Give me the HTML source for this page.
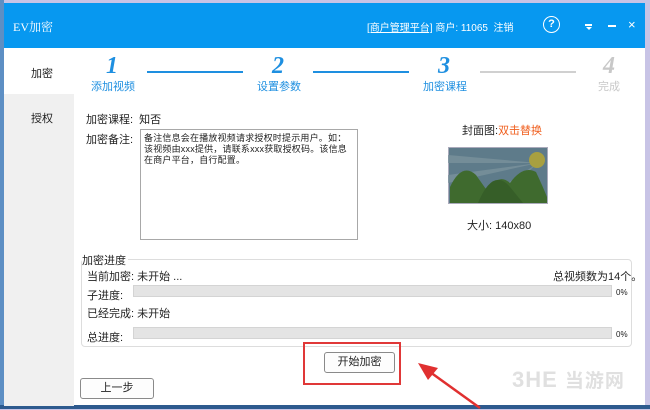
<!DOCTYPE html>
<html><head><meta charset="utf-8"><style>
*{margin:0;padding:0;box-sizing:border-box}
body{width:650px;height:409px;overflow:hidden;background:#c8c4e6;position:relative;font-family:"Liberation Sans","Noto Sans CJK SC",sans-serif;font-size:11px;color:#222}
.a{position:absolute}
#win{left:4px;top:3px;width:641px;height:403px;background:#fff}
#title{left:4px;top:3px;width:641px;height:45px;background:#0798f0;color:#fff}
#side{left:4px;top:48px;width:70px;height:358px;background:#f0f0f0}
.bar{height:12px;background:#e4e4e4;border:1px solid #d4d4d4}
.btn{border:1px solid #8a8a8a;border-radius:3px;background:#fdfdfd;text-align:center;font-size:11px}
.num{font-family:"Liberation Serif",serif;font-style:italic;font-weight:bold;font-size:24px;color:#1e8fe0}
.lbl{color:#1e8fe0;font-size:11px}
</style></head><body>
<div class="a" id="win"></div>
<div class="a" style="left:0;top:0;width:4px;height:409px;background:#5d8fc4"></div>
<div class="a" style="left:0;top:405px;width:650px;height:4px;background:#2d5a8e"></div>
<div class="a" id="title">
 <div class="a" style="left:9px;top:15px;font-size:12px;font-family:'Liberation Serif','Noto Serif CJK SC',serif">EV加密</div>
 <div class="a" style="left:363px;top:16px;font-size:10px"><span style="text-decoration:underline">[商户管理平台]</span> 商户: 11065 &nbsp;注销</div>
 <div class="a" style="left:539px;top:13px;width:17px;height:17px;border:1.5px solid #fff;border-radius:50%;text-align:center;font-size:11px;line-height:14px;font-weight:bold">?</div>
 <div class="a" style="left:581px;top:21px;width:7px;height:2px;background:#fff"></div>
 <div class="a" style="left:582px;top:24px;width:0;height:0;border-left:3.5px solid transparent;border-right:3.5px solid transparent;border-top:3px solid #fff"></div>
 <div class="a" style="left:604px;top:22px;width:8px;height:1.5px;background:#fff"></div>
 <div class="a" style="left:624px;top:14px;font-size:13px">×</div>
</div>
<div class="a" id="side"></div>
<div class="a" style="left:4px;top:48px;width:71px;height:46px;background:#fff"></div>
<div class="a" style="left:31px;top:65px">加密</div>
<div class="a" style="left:31px;top:110px">授权</div>

<div class="a num" style="left:106px;top:53px">1</div><div class="a lbl" style="left:91px;top:78px">添加视频</div>
<div class="a" style="left:147px;top:71px;width:96px;height:2px;background:#1e8fe0"></div>
<div class="a num" style="left:272px;top:53px">2</div><div class="a lbl" style="left:257px;top:78px">设置参数</div>
<div class="a" style="left:313px;top:71px;width:96px;height:2px;background:#1e8fe0"></div>
<div class="a num" style="left:438px;top:53px">3</div><div class="a lbl" style="left:423px;top:78px">加密课程</div>
<div class="a" style="left:480px;top:71px;width:96px;height:2px;background:#d0d0d0"></div>
<div class="a num" style="left:603px;top:53px;color:#c8c8c8">4</div><div class="a" style="left:598px;top:78px;color:#c8c8c8">完成</div>

<div class="a" style="left:86px;top:111px">加密课程: &nbsp;知否</div>
<div class="a" style="left:86px;top:131px">加密备注:</div>
<div class="a" style="left:140px;top:129px;width:218px;height:111px;border:1px solid #a8a8a8;padding:3px 3px;font-size:9px;line-height:11px;letter-spacing:0.2px;word-break:break-all">备注信息会在播放视频请求授权时提示用户。如：该视频由xxx提供，请联系xxx获取授权码。该信息在商户平台，自行配置。</div>

<div class="a" style="left:462px;top:122px">封面图:<span style="color:#f06020">双击替换</span></div>
<svg class="a" style="left:448px;top:147px" width="100" height="57" viewBox="0 0 100 57">
<rect x="0.5" y="0.5" width="99" height="56" fill="#5e7b8a" stroke="#aab"/>
<g fill="#7a929c" opacity=".8"><polygon points="90,16 0,8 0,16"/><polygon points="90,16 0,28 0,36"/><polygon points="90,16 30,56 45,56"/></g>
<circle cx="89" cy="13" r="8" fill="#a8a040"/>
<path d="M2 56 L2 40 Q14 15 28 28 L40 45 Q50 25 62 36 Q75 18 88 25 Q95 40 99 50 L99 56Z" fill="#3f6a2e"/>
<path d="M30 56 Q45 20 62 40 L75 56Z" fill="#365e28"/>
</svg>
<div class="a" style="left:467px;top:217px">大小: 140x80</div>

<div class="a" style="left:81px;top:259px;width:551px;height:88px;border:1px solid #ddd;border-radius:4px"></div>
<div class="a" style="left:82px;top:252px;background:#fff;padding-right:2px">加密进度</div>
<div class="a" style="left:87px;top:268px">当前加密: 未开始 ...</div>
<div class="a" style="left:553px;top:268px">总视频数为14个。</div>
<div class="a" style="left:87px;top:287px">子进度:</div>
<div class="a bar" style="left:133px;top:285px;width:479px"></div>
<div class="a" style="left:616px;top:288px;font-size:8px">0%</div>
<div class="a" style="left:87px;top:305px">已经完成: 未开始</div>
<div class="a" style="left:87px;top:329px">总进度:</div>
<div class="a bar" style="left:133px;top:327px;width:479px"></div>
<div class="a" style="left:616px;top:330px;font-size:8px">0%</div>

<div class="a" style="left:303px;top:342px;width:98px;height:43px;border:2px solid #e03838"></div>
<div class="a btn" style="left:324px;top:352px;width:71px;height:21px;line-height:19px">开始加密</div>
<div class="a btn" style="left:80px;top:378px;width:74px;height:21px;line-height:19px">上一步</div>
<svg class="a" style="left:410px;top:360px" width="80" height="50"><line x1="70" y1="48" x2="20" y2="12" stroke="#e03030" stroke-width="2.5"/><polygon points="8,3 28,8 18,20" fill="#e03030"/></svg>
<div class="a" style="left:512px;top:366px;font-size:22px;color:#e0e0e0;font-weight:bold;letter-spacing:1px">3HE <span style="font-size:19px">当游网</span></div>
</body></html>
